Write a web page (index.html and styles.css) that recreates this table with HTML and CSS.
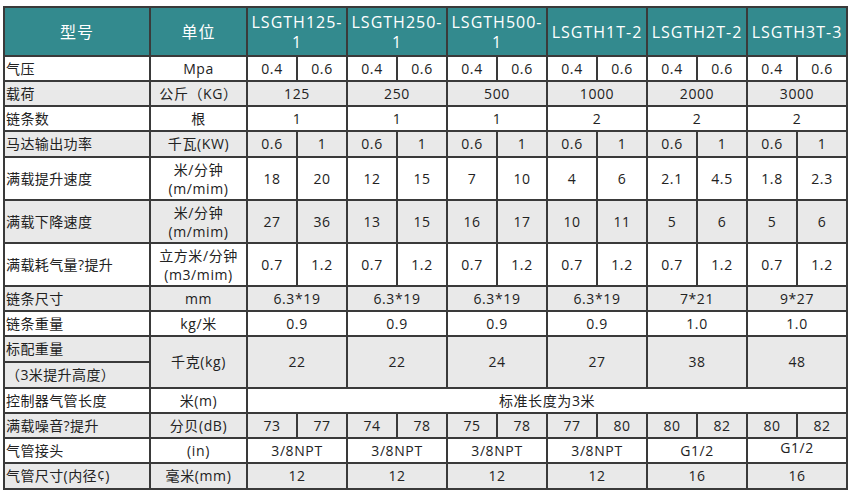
FILE: index.html
```html
<!DOCTYPE html>
<html lang="zh">
<head>
<meta charset="utf-8">
<title>LSGTH 参数表</title>
<link rel="stylesheet" href="styles.css">
</head>
<body>
<table class="spec">
<colgroup>
<col class="c-label"><col class="c-unit">
<col class="c-v"><col class="c-v"><col class="c-v"><col class="c-v"><col class="c-v"><col class="c-v">
<col class="c-v"><col class="c-v"><col class="c-v"><col class="c-v"><col class="c-v"><col class="c-v">
</colgroup>
<tr class="hd">
<th>型号</th><th>单位</th>
<th colspan="2">LSGTH125-<br>1</th><th colspan="2">LSGTH250-<br>1</th><th colspan="2">LSGTH500-<br>1</th>
<th colspan="2">LSGTH1T-2</th><th colspan="2">LSGTH2T-2</th><th colspan="2">LSGTH3T-3</th>
</tr>
<tr class="w r25">
<td class="lb">气压</td><td>Mpa</td>
<td>0.4</td><td>0.6</td><td>0.4</td><td>0.6</td><td>0.4</td><td>0.6</td><td>0.4</td><td>0.6</td><td>0.4</td><td>0.6</td><td>0.4</td><td>0.6</td>
</tr>
<tr class="g r25">
<td class="lb">载荷</td><td>公斤（KG）</td>
<td colspan="2">125</td><td colspan="2">250</td><td colspan="2">500</td><td colspan="2">1000</td><td colspan="2">2000</td><td colspan="2">3000</td>
</tr>
<tr class="w r25">
<td class="lb">链条数</td><td>根</td>
<td colspan="2">1</td><td colspan="2">1</td><td colspan="2">1</td><td colspan="2">2</td><td colspan="2">2</td><td colspan="2">2</td>
</tr>
<tr class="g r26">
<td class="lb">马达输出功率</td><td>千瓦(KW)</td>
<td>0.6</td><td>1</td><td>0.6</td><td>1</td><td>0.6</td><td>1</td><td>0.6</td><td>1</td><td>0.6</td><td>1</td><td>0.6</td><td>1</td>
</tr>
<tr class="w r43">
<td class="lb">满载提升速度</td><td class="two">米/分钟<br>(m/mim)</td>
<td>18</td><td>20</td><td>12</td><td>15</td><td>7</td><td>10</td><td>4</td><td>6</td><td>2.1</td><td>4.5</td><td>1.8</td><td>2.3</td>
</tr>
<tr class="g r43">
<td class="lb">满载下降速度</td><td class="two">米/分钟<br>(m/mim)</td>
<td>27</td><td>36</td><td>13</td><td>15</td><td>16</td><td>17</td><td>10</td><td>11</td><td>5</td><td>6</td><td>5</td><td>6</td>
</tr>
<tr class="w r43">
<td class="lb">满载耗气量?提升</td><td class="two">立方米/分钟<br>(m3/mim)</td>
<td>0.7</td><td>1.2</td><td>0.7</td><td>1.2</td><td>0.7</td><td>1.2</td><td>0.7</td><td>1.2</td><td>0.7</td><td>1.2</td><td>0.7</td><td>1.2</td>
</tr>
<tr class="g r25">
<td class="lb">链条尺寸</td><td>mm</td>
<td colspan="2">6.3*19</td><td colspan="2">6.3*19</td><td colspan="2">6.3*19</td><td colspan="2">6.3*19</td><td colspan="2">7*21</td><td colspan="2">9*27</td>
</tr>
<tr class="w r25">
<td class="lb">链条重量</td><td>kg/米</td>
<td colspan="2">0.9</td><td colspan="2">0.9</td><td colspan="2">0.9</td><td colspan="2">0.9</td><td colspan="2">1.0</td><td colspan="2">1.0</td>
</tr>
<tr class="g r26">
<td class="lb">标配重量</td><td rowspan="2">千克(kg)</td>
<td colspan="2" rowspan="2">22</td><td colspan="2" rowspan="2">22</td><td colspan="2" rowspan="2">24</td><td colspan="2" rowspan="2">27</td><td colspan="2" rowspan="2">38</td><td colspan="2" rowspan="2">48</td>
</tr>
<tr class="g r26">
<td class="lb">（3米提升高度）</td>
</tr>
<tr class="w r25">
<td class="lb">控制器气管长度</td><td>米(m)</td>
<td colspan="12">标准长度为3米</td>
</tr>
<tr class="g r25">
<td class="lb">满载噪音?提升</td><td>分贝(dB)</td>
<td>73</td><td>77</td><td>74</td><td>78</td><td>75</td><td>78</td><td>77</td><td>80</td><td>80</td><td>82</td><td>80</td><td>82</td>
</tr>
<tr class="w r25">
<td class="lb">气管接头</td><td>(in)</td>
<td colspan="2">3/8NPT</td><td colspan="2">3/8NPT</td><td colspan="2">3/8NPT</td><td colspan="2">3/8NPT</td><td colspan="2">G1/2</td><td colspan="2" class="up">G1/2</td>
</tr>
<tr class="g r26">
<td class="lb">气管尺寸(内径¢)</td><td>毫米(mm)</td>
<td colspan="2">12</td><td colspan="2">12</td><td colspan="2">12</td><td colspan="2">12</td><td colspan="2">16</td><td colspan="2">16</td>
</tr>
</table>
</body>
</html>
```
FILE: styles.css
```css
html, body {
  margin: 0;
  padding: 0;
  background: #ffffff;
}
body {
  padding: 6px 0 0 3px;
  font-family: "Open Sans", "Noto Sans CJK SC", sans-serif;
  color: #222222;
}
.spec {
  border-collapse: collapse;
  table-layout: fixed;
  width: 843px;
}
.c-label { width: 146px; }
.c-unit { width: 97px; }
.c-v { width: 50px; }
.spec th, .spec td {
  border: 2px solid #3a3a3a;
  padding: 0 2px;
  text-align: center;
  vertical-align: middle;
  white-space: nowrap;
  overflow: hidden;
}
.spec td {
  font-size: 14px;
  letter-spacing: 0.6px;
  line-height: 16px;
}
.spec th {
  background: #338a8e;
  color: #ffffff;
  font-weight: normal;
  font-size: 16px;
  letter-spacing: 1px;
  line-height: 20px;
}
.hd { height: 49px; }
.r25 { height: 25px; }
.r26 { height: 26px; }
.r43 { height: 43px; }
.w td { background: #ffffff; }
.g td { background: #e9e9e9; }
.spec td.lb {
  text-align: left;
  padding-left: 1px;
  letter-spacing: 0.4px;
}
.spec td.two {
  line-height: 19px;
}
.spec td.up {
  vertical-align: top;
  padding-top: 1px;
}
```
